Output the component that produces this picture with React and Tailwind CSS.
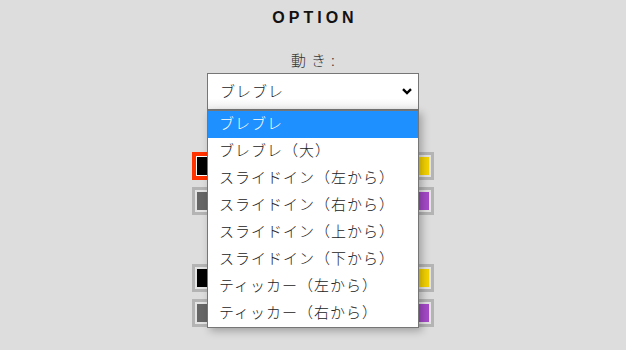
import React from "react";

const jp = { fontFamily: '"Noto Sans CJK JP", "Noto Sans", sans-serif' };

const row1 = ["#000000", "#ffffff", "#ff3b30", "#ff9500", "#34c759", "#007aff", "#5ac8fa", "#f5d400"];
const row2 = ["#666666", "#999999", "#8b4513", "#ff69b4", "#006400", "#000080", "#00ced1", "#a64ac9"];

function Swatch({ color, selected }) {
  if (selected) {
    return (
      <div className="w-[28px] h-[28px] border-[4px] border-[#ff3300] bg-white p-[1px]">
        <div className="w-full h-full" style={{ backgroundColor: color }} />
      </div>
    );
  }
  return (
    <div className="w-[28px] h-[28px] border-[3px] border-[#b4b4b4] bg-[#e4e4e4] p-[2px]">
      <div className="w-full h-full" style={{ backgroundColor: color }} />
    </div>
  );
}

function SwatchRow({ colors, selectedIndex = -1 }) {
  return (
    <div className="flex justify-between w-[243px]">
      {colors.map((c, i) => (
        <Swatch key={i} color={c} selected={i === selectedIndex} />
      ))}
    </div>
  );
}

const options = [
  "ブレブレ",
  "ブレブレ（大）",
  "スライドイン（左から）",
  "スライドイン（右から）",
  "スライドイン（上から）",
  "スライドイン（下から）",
  "ティッカー（左から）",
  "ティッカー（右から）",
];

export default function App() {
  return (
    <div className="w-[626px] h-[350px] overflow-hidden bg-[#dddddd] flex flex-col items-center">
      <h1
        className="pt-[6px] leading-[24px] text-[16px] font-bold tracking-[4px] text-[#111111] pl-[4px]"
        style={{ fontFamily: '"Liberation Sans", Arial, sans-serif' }}
      >
        OPTION
      </h1>
      <div
        className="mt-[20px] h-[20px] leading-[20px] text-[15px] font-light tracking-[5px] text-[#333333] pl-[5px]"
        style={jp}
      >
        動き:
      </div>
      <div className="relative mt-[3px] w-[212px]">
        <div
          className="h-[37px] w-[212px] border border-[#767676] bg-gradient-to-b from-white from-70% to-[#eeeeee] flex items-center justify-between pl-[12px] pr-[6px] text-[15px] font-light tracking-[1px] text-[#222222]"
          style={jp}
        >
          <span className="pb-[1px]">ブレブレ</span>
          <svg width="10" height="7" viewBox="0 0 10 7">
            <path d="M1 1.2 L5 5 L9 1.2" fill="none" stroke="#000" strokeWidth="2.4" />
          </svg>
        </div>
        <div
          className="absolute left-0 top-[37px] w-[212px] bg-white border border-[#767676] shadow-[3px_3px_8px_rgba(0,0,0,0.28)] z-10"
          style={jp}
        >
          {options.map((o, i) => (
            <div
              key={i}
              className={
                "h-[27px] flex items-center pb-[3px] pl-[11px] text-[15px] font-light tracking-[1px] " +
                (i === 0 ? "bg-[#1e90ff] text-white" : "text-[#222222]")
              }
            >
              {o}
            </div>
          ))}
        </div>
      </div>
      <div className="h-[42px]" />
      <div className="flex flex-col gap-[7px]">
        <SwatchRow colors={row1} selectedIndex={0} />
        <SwatchRow colors={row2} />
      </div>
      <div className="h-[49px]" />
      <div className="flex flex-col gap-[7px]">
        <SwatchRow colors={row1} />
        <SwatchRow colors={row2} />
      </div>
    </div>
  );
}
